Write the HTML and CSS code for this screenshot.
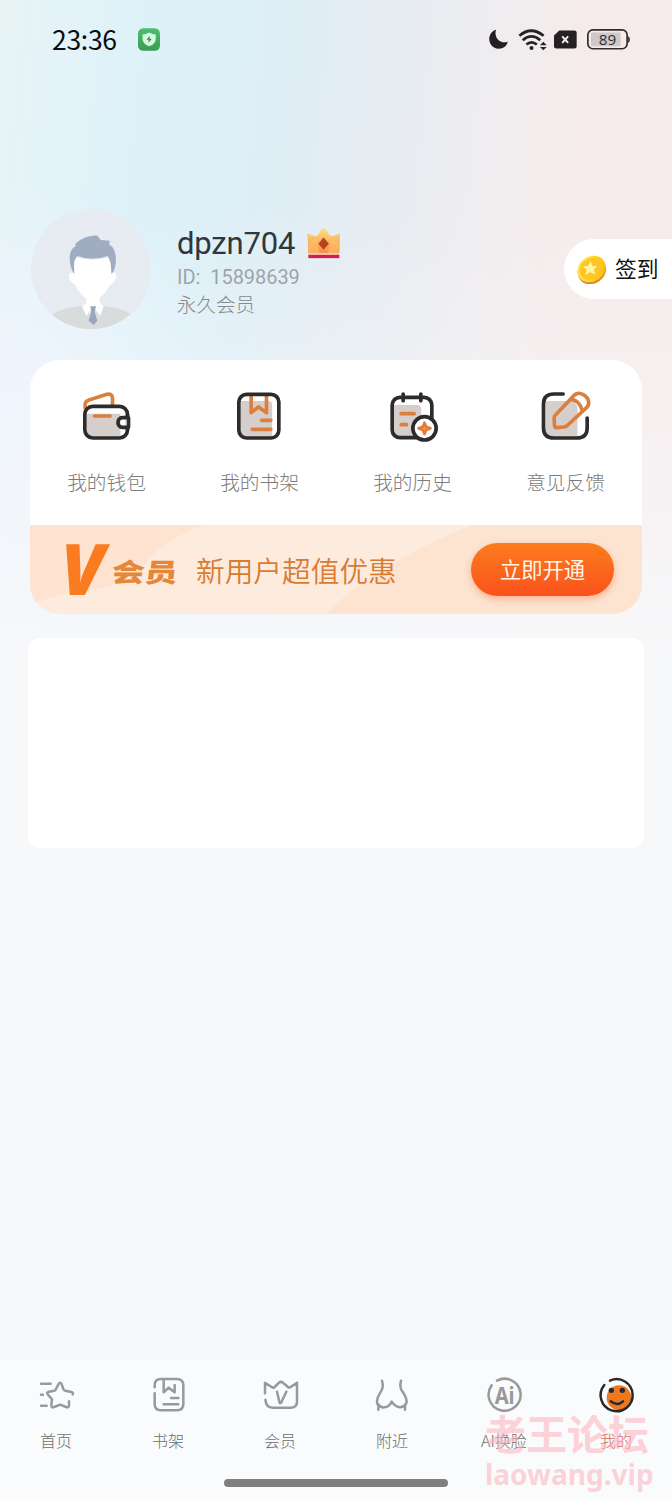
FILE: index.html
```html
<!DOCTYPE html>
<html lang="zh-CN">
<head>
<meta charset="utf-8">
<title>我的</title>
<link rel="stylesheet" href="styles.css">
</head>
<body>
<div class="page">
  <header class="status">
    <span class="time">23:36</span>
    <svg class="guard" viewBox="414 81 67 69"><defs><linearGradient id="gr" x2="0" y2="1"><stop stop-color="#50bd72"/><stop offset="1" stop-color="#379c50"/></linearGradient></defs><rect x="414" y="81" width="67" height="69" rx="16" fill="url(#gr)"/><path d="M448 94q10 6 20 6v14q0 15-20 22q-20-7-20-22v-14q10 0 20-6z" fill="#d5fae1"/><path d="M450 104l-10 12h7l-2 10 11-13h-7z" fill="#35884b"/></svg>
    <span class="spacer"></span>
    <svg class="moon" viewBox="86 56 57 60"><path d="M107 58C78 66 80 114 115 115c15 0 25-9 27-21-24 8-42-14-35-36z" fill="#231f22"/></svg>
    <svg class="wifi" viewBox="173 50 86 68"><g fill="none" stroke="#272325" stroke-width="8"><path d="M177 73q35-30 72 0M187 86q26-22 52 0M198 99q15-13 31 0"/></g><circle cx="213" cy="109" r="6" fill="#272325"/><path d="M248 91l10 10h-20zM248 116l10-10h-20z" fill="#272325"/></svg>
    <svg class="sim" viewBox="282 58 70 57"><path d="M298 59h46q7 0 7 7v41q0 7-7 7h-55q-7 0-7-7V74z" fill="#252123"/><path d="M307 77l18 20m0-20l-18 20" stroke="#f6eeee" stroke-width="6"/></svg>
    <svg class="battery" viewBox="380 56 128 62"><rect x="382.500" y="58.500" width="117" height="56" rx="15" fill="#f3eaea" stroke="#332c2e" stroke-width="5"/><rect x="392" y="66" width="88" height="41" rx="4" fill="#cec8c9"/><path d="M502 77q6 1 6 10t-6 10z" fill="#4a4244"/><text x="415" y="102" textLength="52" lengthAdjust="spacingAndGlyphs" font-size="43">89</text></svg>
  </header>

  <section class="profile">
    <svg class="avatar" viewBox="33 27 360 360"><defs><clipPath id="av"><circle cx="213" cy="207" r="180"/></clipPath></defs><g clip-path="url(#av)"><path fill="#e7ebf2" d="M33 27h360v360H33z"/><path fill="#d8dcdc" d="M90 350q20-25 104-33h50q75 8 100 35v40H90z"/><path fill="#fff" d="M201 285l-3 26-12 8 13 29 20-26 22 25 10-28-11-9-1-25z"/><path fill="#fff" d="M162 170q52 18 112 0v48q18-4 14 14-4 18-16 21-23 40-45 47h-20q-28-13-43-48-16-4-17-23 0-13 13-10z"/><path fill="#9facc1" d="M163 223c-17-25-19-66-3-80 5-3 8-2 6-11 11-12 27-20 43-23 13-3 21-3 24-1l9 12 27 2-1 13c24 8 26 64 7 88l-4-38-8-17q-43 17-92 0l-9 18z"/><path fill="#98a6bb" d="M211 319h17l-4 16 8 27-11 13-15-13 8-27z"/></g></svg>
    <div class="who">
      <div class="name"><span>dpzn704</span>
        <svg class="crown" viewBox="863 80 98 94"><defs><linearGradient id="cr" x2="0" y2="1"><stop stop-color="#ffe084"/><stop offset="1" stop-color="#f98a49"/></linearGradient></defs><path d="M864 97q14 9 27 10 7-5 14-20 7-8 14 0 8 15 16 20 12-2 26-10l-2 61h-92z" fill="url(#cr)"/><path d="M867 127l24-13 10 44h-33zM959 127l-24-13-10 44h33z" fill="#ffc167" opacity=".6"/><path d="M912 111l16 18-16 18-15-18z" fill="#b74220"/><path d="M867 158h92v4h-92z" fill="#ffd5aa"/><path d="M867 162h92v10h-92z" fill="#d41c50"/></svg>
      </div>
      <div class="uid"><span>ID:</span><span>15898639</span></div>
      <div class="level">永久会员</div>
    </div>
    <div class="checkin">
      <svg class="coin" viewBox="110 103 89 86"><defs><linearGradient id="co" x2="1" y2="1"><stop stop-color="#fff36b"/><stop offset=".5" stop-color="#ffd52a"/><stop offset="1" stop-color="#ffaf08"/></linearGradient></defs><g transform="rotate(-35 154 146)"><ellipse cx="152" cy="149" rx="44" ry="38" fill="#d88c20"/><ellipse cx="154" cy="144" rx="44" ry="37" fill="url(#co)"/><ellipse cx="153" cy="143" rx="36" ry="30" fill="#ffc526"/></g><path d="M151 121l5 15 14-1-10 12 5 14-16-7-14 8 3-16-11-9 16-2z" fill="#fff799"/></svg>
      <span>签到</span>
    </div>
  </section>

  <main>
    <section class="card">
      <nav class="shortcuts">
        <a class="shortcut"><svg viewBox="139.500 48 180 180" class="ico"><path class="fill" d="M172 131h101v72h-91q-10 0-10-15z"/><path class="or" d="M167 115v-12q0-8 9-12l56-18q15-4 17 11v20M195 138h47"/><rect class="bk" x="166" y="109" width="128" height="95" rx="24"/><path fill="#fff" d="M288 139h17v37h-17z"/><path class="bk" d="M294 143v-9M294 172v8M297 143h-18c-18 0-18 29 0 29h18z"/></svg><span>我的钱包</span></a>
        <a class="shortcut"><svg viewBox="598.500 48 180 180" class="ico"><path class="fill" d="M633 93h83q12 0 12 12v98h-79q-16 0-16-15z"/><path class="or" d="M665 75v53l22-17 24 17V75M696 151h28M668 178h56"/><rect class="bk" x="628" y="73" width="120" height="131" rx="23"/></svg><span>我的书架</span></a>
        <a class="shortcut"><svg viewBox="139.500 48 180 180" class="ico"><path class="fill" d="M174 105h71q12 0 12 12v85h-67q-16 0-16-16z"/><rect class="bk" x="170" y="82" width="119" height="121" rx="23"/><path class="bk" d="M203 72v20M256 72v20"/><path class="or" d="M197 131h39M197 164h16"/><circle class="bk disc" cx="267" cy="175" r="35"/><path d="M267 158l5 12 13 5-13 5-5 12-5-12-13-5 13-5z" fill="#ff9a45" stroke="#df7d3b" stroke-width="8" stroke-linejoin="round"/></svg><span>我的历史</span></a>
        <a class="shortcut"><svg viewBox="598.500 48 180 180" class="ico"><path class="fill" d="M630 93h84q12 0 12 12v98h-76q-20 0-20-16z"/><path class="bk" d="M683 72h-28q-31 0-31 30v72q0 30 31 30h69q31 0 31-30v-30"/><path fill="#fff" d="M706 88l13-14a24 24 0 0 1 34 34l-13 14z"/><path class="or" d="M656 144q0-5 4-9l56-59c20-19 58 14 38 36l-57 53q-5 5-12 6l-22 2q-6 0-6-7zM706 88q28 4 34 34"/></svg><span>意见反馈</span></a>
      </nav>
      <section class="promo">
        <svg class="waves" viewBox="30 45 1836 268" preserveAspectRatio="none"><path fill="#fdebdd" d="M30 45h1836v268H30z"/><path fill="#fde3d0" d="M30 45h525q-105 35-165 100-55 70-150 90-110 10-210 50z"/><path fill="#fce4d1" d="M1360 45q-170 65-250 125-100 50-192 143h948V45z"/></svg>
        <span class="v">V</span><span class="vip">会员</span><span class="offer">新用户超值优惠</span>
        <button class="open">立即开通</button>
      </section>
    </section>
    <section class="blank"></section>
  </main>

  <footer class="tabs">
    <nav class="tabrow">
      <a class="tab"><svg viewBox="108 75 120 120"><path d="M123 101h29M123 134h6M123 167h17M218 133c3-5-2-7-7-8l-16-3q-3-1-5-5l-5-14q-4-9-10 0l-7 14q-1 4-5 5l-16 3q-9 2-3 9l12 14-2 17q0 10 8 6l19-7 17 7q9 4 9-7v-10"/></svg><span>首页</span></a>
      <a class="tab"><svg viewBox="444 75 120 120"><path d="M464 112v-6q0-19 19-19h47q20 0 20 19v57q0 18-20 18h-47q-19 0-19-18v-33M491 90v37l15-14 18 14v-22M513 144h22M491 163h44"/></svg><span>书架</span></a>
      <a class="tab"><svg viewBox="780 75 120 120"><path d="M795 130V98l21 14q4 3 8-1l13-13q6-5 12 0l15 13q3 3 7 1l20-14v57q0 18-20 18h-53q-20 0-22-24M831 125l8 34h4l16-34"/></svg><span>会员</span></a>
      <a class="tab"><svg viewBox="108 75 120 120"><path d="M138 92c10 34-15 34-15 63q-1 5 4 10v14M195 92c-9 34 16 34 17 63q0 5-5 10v14M125 161q9 13 20 11 15-2 22-17 10 15 24 17 11 1 19-11"/></svg><span>附近</span></a>
      <a class="tab"><svg viewBox="444 75 120 120"><path d="M483 92a48 48 0 1 1-16 14"/><text x="476" y="161" textLength="60" lengthAdjust="spacingAndGlyphs">Ai</text></svg><span>AI换脸</span></a>
      <a class="tab active"><svg viewBox="780 75 120 120"><circle cx="849" cy="143" r="37" fill="#ef771f"/><path d="M822 92a48 48 0 1 1-17 13M824 154q20 16 37 0"/><circle class="eye" cx="826" cy="121" r="8"/><circle class="eye" cx="859" cy="121" r="8"/></svg><span>我的</span></a>
    </nav>
    <div class="handle"></div>
    <div class="mark"><div class="mark-cn">老王论坛</div><div class="mark-en">laowang.vip</div></div>
  </footer>
</div>
</body>
</html>
```
FILE: styles.css
```css
* { box-sizing: border-box; }
body { margin: 0; font-family: "Noto Sans CJK SC", sans-serif; background: #f7f8fa; }
svg { display: block; flex: none; }
.page {
  height: 1500px; display: flex; flex-direction: column; overflow: hidden;
  background:
    linear-gradient(180deg, rgba(247,248,250,0) 200px, rgba(247,248,250,.35) 400px, #f7f8fa 660px),
    radial-gradient(ellipse 240px 260px at 0 430px, #edf4ff 0, rgba(237,244,255,0) 100%),
    linear-gradient(96deg, #e8f3f3 0, #e4f3f9 60px, #ddf1f8 150px, #dcf0f8 220px, #e0edf5 310px, #e8ecf1 420px, #f0edef 510px, #f6ebeb 600px, #f7ebeb 100%);
}
.status { height: 78px; padding: 0 42px 0 52px; display: flex; align-items: center; flex: none; }
.time { font-size: 26.5px; line-height: 38px; width: 86px; color: #0b0d10; letter-spacing: -.3px; margin-top: -1px; }
.guard { width: 22px; height: 23px; }
.spacer { flex: 1; }
.moon { width: 19px; height: 20px; }
.wifi { width: 29px; height: 23px; margin-left: 10px; }
.sim { width: 23px; height: 19px; margin-left: 7px; }
.battery { width: 43px; height: 21px; margin-left: 10px; }
.battery text { fill: #332d2f; font-family: "Open Sans", sans-serif; }
.profile { height: 282px; padding: 131px 0 0 31px; display: flex; align-items: flex-start; flex: none; }
.avatar { width: 120px; height: 120px; }
.who { margin: 15px 0 0 26px; flex: 1; }
.name { display: flex; align-items: center; height: 40px; gap: 12px; font: 31px/40px Roboto, sans-serif; color: #30373c; letter-spacing: -.15px; }
.crown { width: 33px; height: 32px; margin-top: -2px; }
.uid { display: flex; gap: 10px; font: 20px/26px Roboto, sans-serif; color: #9fa4a9; letter-spacing: -.05px; }
.level { font-size: 19.5px; line-height: 27px; color: #85898e; font-weight: 300; }
.checkin { width: 108px; height: 60px; margin-top: 30px; padding-left: 13px; border-radius: 30px 0 0 30px; background: #fff; display: flex; align-items: center; gap: 8px; font-size: 21.8px; color: #111; }
.checkin span { margin-top: -3px; }
.coin { width: 30px; height: 29px; }
.card { margin: 0 30px; height: 254px; border-radius: 30px; overflow: hidden; background: #fff; }
.shortcuts { height: 165px; display: grid; grid-template-columns: repeat(4, 1fr); }
.shortcut { display: flex; flex-direction: column; align-items: center; padding-top: 26px; font-size: 19.7px; line-height: 30px; font-weight: 300; color: #7b7b7b; }
.shortcut span { margin-top: 21px; }
.ico { width: 60px; height: 60px; position: relative; left: -.5px; }
.ico .bk, .ico .or { fill: none; stroke-width: 11; stroke-linecap: round; stroke-linejoin: round; }
.ico .bk { stroke: #2d2c2d; }
.ico .or { stroke: #dc7f3e; }
.ico .disc { fill: #fff; }
.ico .fill { fill: #d5cecb; }
.promo { position: relative; height: 89px; display: flex; align-items: center; padding: 0 28px 0 31px; }
.waves { position: absolute; inset: 0; width: 100%; height: 100%; }
.promo > span, .open { position: relative; white-space: nowrap; }
.v { width: 51px; margin-top: -5px; font: italic 800 71px/89px "Open Sans", sans-serif; color: #fa7b20; }
.vip { width: 84px; font-size: 33px; font-weight: 900; line-height: 40px; color: #e58639; transform: skewX(-6deg) scaleY(.79); margin-top: 2px; }
.offer { font-size: 28.7px; line-height: 42px; font-weight: 350; color: #d97b32; margin-top: 0; }
.open { width: 143px; height: 53px; margin-left: auto; padding: 0 0 2px; border: 0; border-radius: 27px; font: 400 21.300px/30px "Noto Sans CJK SC", sans-serif; color: #fff5ea; background: linear-gradient(#fc7c1c, #fa521d); box-shadow: 0 3px 7px rgba(250,100,30,.4); }
.blank { height: 210px; margin: 24px 28px 0; border-radius: 12px; background: #fff; }
.tabs { position: relative; height: 140px; margin-top: auto; background: #fafbfc; flex: none; }
.tabrow { height: 119px; display: grid; grid-template-columns: repeat(6, 1fr); }
.tab { display: flex; flex-direction: column; align-items: center; padding-top: 15px; font-size: 16px; line-height: 24px; font-weight: 300; color: #6d6e70; }
.tab svg { width: 40px; height: 40px; }
.tab span { margin-top: 13px; }
.tab path { fill: none; stroke: #98999b; stroke-width: 7.500; stroke-linecap: round; stroke-linejoin: round; }
.tab text { font: 700 71px "Noto Sans", sans-serif; fill: #98999b; }
.tab.active path { stroke: #29282a; }
.tab .eye { fill: #29282a; }
.tab.active { color: #d3655f; }
.handle { width: 224px; height: 8px; margin: 0 auto; border-radius: 4px; background: #7f7f80; }
.mark { position: absolute; left: 485px; top: 48px; color: rgba(250,183,193,.62); white-space: nowrap; }
.mark-cn { font-size: 41px; font-weight: 700; line-height: 48px; }
.mark-en { margin-top: 2px; font: 700 28px/32px "Noto Sans", sans-serif; }
```
